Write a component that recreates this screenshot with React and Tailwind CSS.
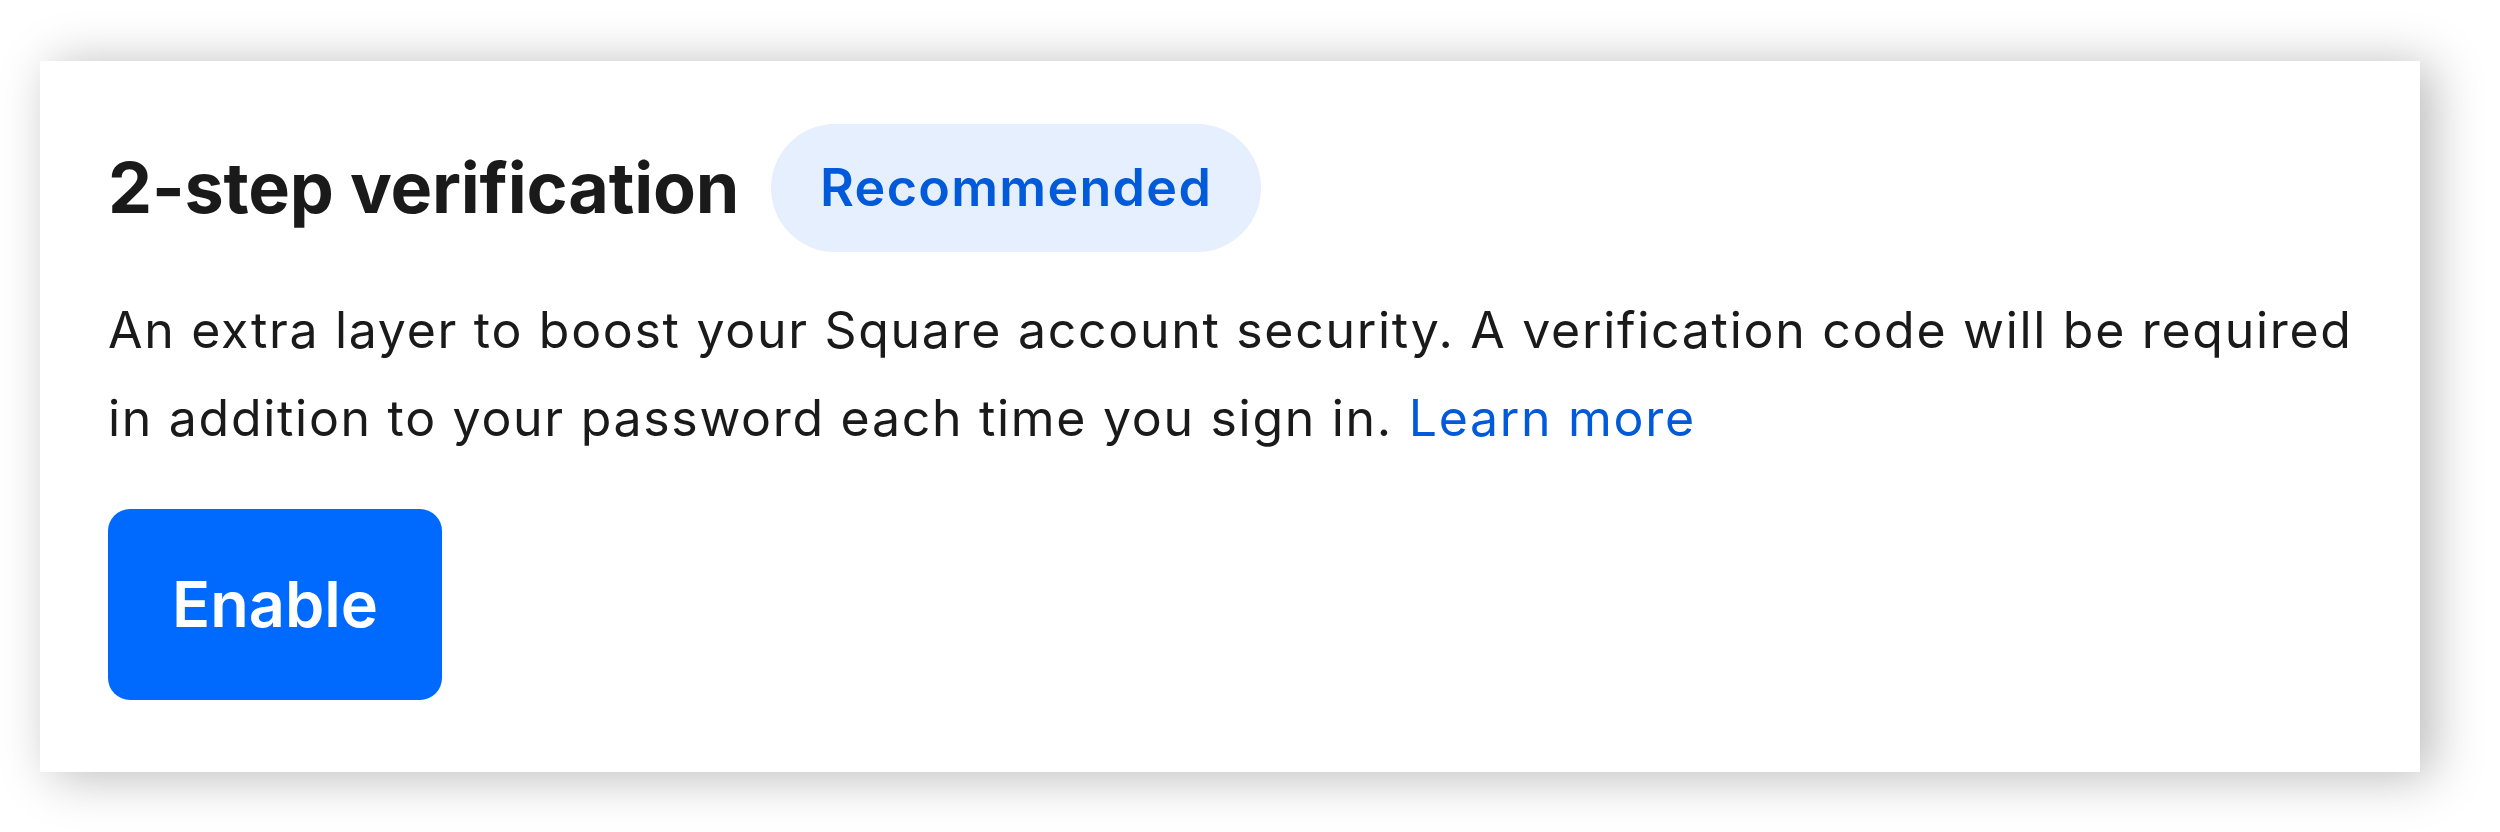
export default function App() {
  return (
    <div className="w-[2500px] h-[832px] bg-white" style={{ fontFamily: 'Inter, "Noto Sans", sans-serif' }}>
      <div className="pt-[61px] pl-[40px]">
        <div className="w-[2380px] h-[711px] bg-white shadow-[12px_4px_48px_rgba(0,0,0,0.28)] pl-[68px] pt-[63px] flex flex-col items-start">
          <div className="flex items-center gap-[32px]">
            <h1 className="text-[70px] font-bold tracking-[-0.2px] text-[#1a1a1a] leading-none">2-step verification</h1>
            <span className="h-[128px] px-[49px] rounded-full bg-[#e6effd] text-[#005ad9] text-[52px] tracking-[1.3px] font-semibold flex items-center">Recommended</span>
          </div>
          <p className="mt-[34px] text-[50px] tracking-[1.7px] leading-[88px] text-[#1a1a1a] w-[2270px]">
            An extra layer to boost your Square account security. A verification code will be required in addition to your password each time you sign in.{' '}
            <a className="text-[#005ad9]">Learn more</a>
          </p>
          <button className="mt-[47px] w-[334px] h-[191px] rounded-[22px] bg-[#006aff] text-white text-[63px] font-semibold">Enable</button>
        </div>
      </div>
    </div>
  );
}
